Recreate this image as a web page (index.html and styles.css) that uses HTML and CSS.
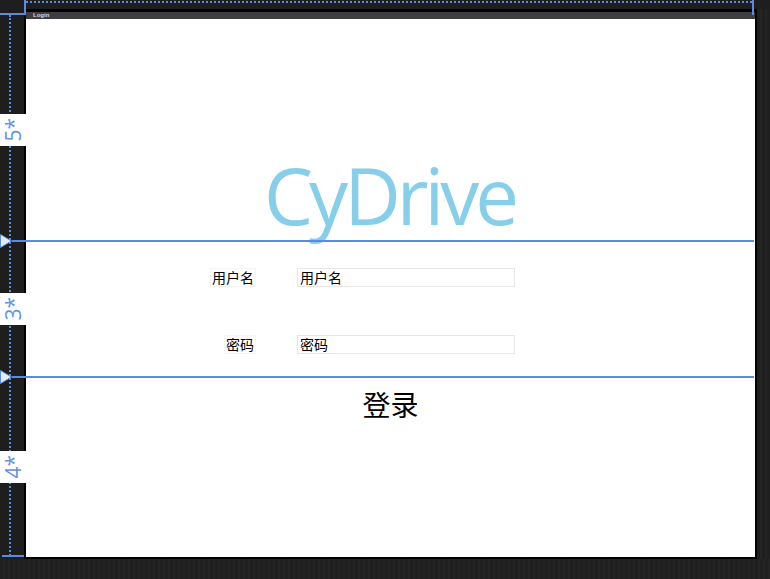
FILE: index.html
```html
<!DOCTYPE html>
<html>
<head>
<meta charset="utf-8">
<title>Login</title>
<link rel="stylesheet" href="styles.css">
</head>
<body>
<div class="stage">
  <div class="top-gap"></div>
  <div class="main">
    <div class="ruler">
      <div class="ruler-spacer"></div>
      <div class="ruler-cell"><div class="ruler-label"><span class="ruler-text">5*</span></div></div>
      <div class="ruler-cell"><div class="ruler-label"><span class="ruler-text">3*</span></div></div>
      <div class="ruler-cell"><div class="ruler-label"><span class="ruler-text">4*</span></div></div>
      <div class="ruler-end"></div>
    </div>
    <div class="window">
      <div class="titlebar"><span class="title">Login</span></div>
      <div class="content">
        <div class="row-brand"><div class="brand">CyDrive</div></div>
        <div class="row-form">
          <div class="field"><span class="label">用户名</span><div class="textbox">用户名</div></div>
          <div class="field"><span class="label">密码</span><div class="textbox">密码</div></div>
        </div>
        <div class="row-action"><button class="login-btn" type="button">登录</button></div>
      </div>
    </div>
    <div class="side"></div>
  </div>
  <div class="bottom"></div>

  <div class="adorner corner"></div>
  <div class="adorner top-dots"></div>
  <div class="adorner right-tick"></div>
  <div class="adorner ruler-dots"></div>
  <div class="adorner bottom-tick"></div>
  <div class="adorner gridline gridline-1">
    <svg class="marker" width="12" height="14" viewBox="0 0 12 14"><polygon points="0.5,0.5 11.5,7 0.5,13.5" fill="#e4ecfb" stroke="#5b8be0" stroke-width="1"/></svg>
    <div class="gridline-bar"></div>
  </div>
  <div class="adorner gridline gridline-2">
    <svg class="marker" width="12" height="14" viewBox="0 0 12 14"><polygon points="0.5,0.5 11.5,7 0.5,13.5" fill="#e4ecfb" stroke="#5b8be0" stroke-width="1"/></svg>
    <div class="gridline-bar"></div>
  </div>
</div>
</body>
</html>
```

FILE: styles.css
```css
html, body {
  margin: 0;
  padding: 0;
  background: #1e1e1e;
  overflow: hidden;
}

.stage {
  position: relative;
  width: 770px;
  height: 579px;
  display: flex;
  flex-direction: column;
  background: #1e1e1e;
  font-family: "Noto Sans CJK SC", "Noto Sans", sans-serif;
}

.top-gap {
  height: 9px;
  flex: none;
}

.main {
  height: 550px;
  flex: none;
  display: flex;
}

.ruler {
  width: 24px;
  flex: none;
  display: grid;
  grid-template-rows: 10px 222px 136px 180px 2px;
}

.ruler-cell {
  display: flex;
  align-items: center;
}

.ruler-label {
  position: relative;
  z-index: 3;
  flex: none;
  width: 26px;
  height: 32px;
  background: #ffffff;
  display: flex;
  align-items: center;
  justify-content: center;
}

.ruler-text {
  display: block;
  color: #6393e4;
  font-family: "Open Sans", "Noto Sans", sans-serif;
  font-size: 21px;
  line-height: 24px;
  writing-mode: vertical-rl;
  transform: rotate(180deg);
}

.window {
  width: 729px;
  flex: none;
  border: 2px solid #000000;
  border-top-width: 3px;
  display: flex;
  flex-direction: column;
}

.titlebar {
  height: 7px;
  background: #3d3d42;
  display: flex;
  align-items: center;
  padding-left: 7px;
}

.title {
  font-family: "Liberation Sans", sans-serif;
  font-weight: bold;
  font-size: 6px;
  line-height: 7px;
  color: #d6d6d6;
}

.content {
  height: 538px;
  background: #ffffff;
  display: grid;
  grid-template-rows: 222px 136px 180px;
}

.row-brand {
  display: flex;
  align-items: flex-end;
  justify-content: center;
}

.brand {
  font-family: "Open Sans", "Noto Sans", sans-serif;
  font-size: 78px;
  line-height: 1;
  letter-spacing: -4px;
  margin-bottom: 7px;
  margin-right: 2px;
  color: #87ceeb;
}

.row-form {
  display: flex;
  flex-direction: column;
  padding-top: 27px;
  gap: 48px;
}

.field {
  display: grid;
  grid-template-columns: 230px 218px;
  column-gap: 41px;
  align-items: center;
  height: 19px;
}

.label {
  justify-self: end;
  box-sizing: border-box;
  height: 19px;
  padding: 0 1px;
  border: 1px solid #f4f4f4;
  font-size: 14px;
  line-height: 17px;
  color: #000000;
}

.textbox {
  box-sizing: border-box;
  height: 19px;
  padding: 0 2px;
  border: 1px solid #e6e6e6;
  font-size: 14px;
  line-height: 17px;
  color: #000000;
}

.row-action {
  display: flex;
  justify-content: center;
  align-items: flex-start;
  padding-top: 11px;
}

.login-btn {
  background: none;
  border: none;
  padding: 0;
  margin: 0;
  font-family: "Noto Sans CJK SC", sans-serif;
  font-size: 28px;
  line-height: 32px;
  color: #000000;
}

.side {
  flex: 1;
  background: repeating-linear-gradient(90deg, #1f1f1f 0 3px, #242424 3px 5px);
}

.bottom {
  flex: 1;
  background: repeating-linear-gradient(90deg, #1f1f1f 0 3px, #242424 3px 5px);
}

.adorner {
  position: absolute;
  z-index: 1;
}

.corner {
  left: 0;
  top: 0;
  width: 24px;
  height: 13px;
  border-right: 2px solid #5b8be0;
  border-bottom: 2px solid #5b8be0;
}

.top-dots {
  left: 26px;
  top: 1px;
  width: 726px;
  border-top: 2px dotted #5b8be0;
}

.right-tick {
  left: 752px;
  top: 0;
  width: 2px;
  height: 15px;
  background: #5b8be0;
}

.ruler-dots {
  left: 9px;
  top: 15px;
  height: 541px;
  border-left: 2px dotted #5b8be0;
}

.bottom-tick {
  left: 2px;
  top: 555px;
  width: 22px;
  height: 2px;
  background: #5b8be0;
}

.gridline {
  left: 0;
  display: flex;
  align-items: center;
  height: 14px;
}

.gridline-1 {
  top: 234px;
}

.gridline-2 {
  top: 370px;
}

.marker {
  display: block;
  flex: none;
}

.gridline-bar {
  width: 742px;
  height: 2px;
  background: #5b8be0;
}
```
